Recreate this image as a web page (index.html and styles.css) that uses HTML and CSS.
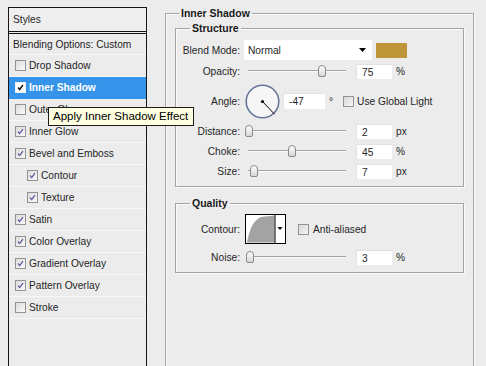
FILE: index.html
```html
<!DOCTYPE html>
<html>
<head>
<meta charset="utf-8">
<link rel="stylesheet" href="styles.css">
</head>
<body>
<div class="dialog">
  <aside class="styles-panel">
    <div class="styles-head">Styles</div>
    <ul class="style-list">
      <li class="row blend">Blending Options: Custom</li>
      <li class="row"><span class="cb"></span>Drop Shadow</li>
      <li class="row active"><span class="cb on"><svg viewBox="0 0 11 11"><path d="M2.5 5.5 L4.5 8 L8.5 2.5" /></svg></span>Inner Shadow</li>
      <li class="row"><span class="cb"></span>Outer Glow</li>
      <li class="row"><span class="cb on"><svg viewBox="0 0 11 11"><path d="M2.5 5.5 L4.5 8 L8.5 2.5" /></svg></span>Inner Glow</li>
      <li class="row"><span class="cb on"><svg viewBox="0 0 11 11"><path d="M2.5 5.5 L4.5 8 L8.5 2.5" /></svg></span>Bevel and Emboss</li>
      <li class="row sub"><span class="cb on"><svg viewBox="0 0 11 11"><path d="M2.5 5.5 L4.5 8 L8.5 2.5" /></svg></span>Contour</li>
      <li class="row sub"><span class="cb on"><svg viewBox="0 0 11 11"><path d="M2.5 5.5 L4.5 8 L8.5 2.5" /></svg></span>Texture</li>
      <li class="row"><span class="cb on"><svg viewBox="0 0 11 11"><path d="M2.5 5.5 L4.5 8 L8.5 2.5" /></svg></span>Satin</li>
      <li class="row"><span class="cb on"><svg viewBox="0 0 11 11"><path d="M2.5 5.5 L4.5 8 L8.5 2.5" /></svg></span>Color Overlay</li>
      <li class="row"><span class="cb on"><svg viewBox="0 0 11 11"><path d="M2.5 5.5 L4.5 8 L8.5 2.5" /></svg></span>Gradient Overlay</li>
      <li class="row"><span class="cb on"><svg viewBox="0 0 11 11"><path d="M2.5 5.5 L4.5 8 L8.5 2.5" /></svg></span>Pattern Overlay</li>
      <li class="row"><span class="cb"></span>Stroke</li>
    </ul>
  </aside>

  <div class="tooltip">Apply Inner Shadow Effect</div>

  <main class="settings">
    <fieldset class="group outer">
      <legend>Inner Shadow</legend>

      <fieldset class="group inner structure">
        <legend>Structure</legend>

        <div class="frow r-blend">
          <span class="lbl">Blend Mode:</span>
          <div class="select"><span>Normal</span><svg class="arrow" viewBox="0 0 7 4"><path d="M0 0 H7 L3.5 4 Z"/></svg></div>
          <span class="swatch"></span>
        </div>

        <div class="frow">
          <span class="lbl">Opacity:</span>
          <div class="slider"><span class="thumb" style="left:75%"></span></div>
          <span class="num">75</span><span class="unit">%</span>
        </div>

        <div class="frow r-angle">
          <span class="lbl">Angle:</span>
          <svg class="dial" viewBox="0 0 35 35">
            <circle cx="17.5" cy="17.5" r="16.3" />
            <line x1="17.5" y1="17.5" x2="29.5" y2="30.2" />
            <circle class="dot" cx="17.5" cy="17.5" r="1.6" />
          </svg>
          <span class="num wide">-47</span>
          <span class="deg">°</span>
          <span class="cb plain"></span>
          <span class="cb-lbl">Use Global Light</span>
        </div>

        <div class="frow">
          <span class="lbl">Distance:</span>
          <div class="slider"><span class="thumb" style="left:2%"></span></div>
          <span class="num">2</span><span class="unit">px</span>
        </div>

        <div class="frow">
          <span class="lbl">Choke:</span>
          <div class="slider"><span class="thumb" style="left:45%"></span></div>
          <span class="num">45</span><span class="unit">%</span>
        </div>

        <div class="frow">
          <span class="lbl">Size:</span>
          <div class="slider"><span class="thumb" style="left:7%"></span></div>
          <span class="num">7</span><span class="unit">px</span>
        </div>
      </fieldset>

      <fieldset class="group inner quality">
        <legend>Quality</legend>

        <div class="frow r-contour">
          <span class="lbl">Contour:</span>
          <svg class="contour" viewBox="0 0 41 30">
            <rect x="0.5" y="0.5" width="40" height="29" fill="#fff" stroke="#000"/>
            <path d="M2 28.5 C4 17, 8 6, 16 3 L29.5 1.5 L29.5 28.5 Z" fill="#a3a3a3"/>
            <line x1="30" y1="1" x2="30" y2="29" stroke="#000"/>
            <path d="M32.5 13 H37.5 L35 16 Z" fill="#000"/>
          </svg>
          <span class="cb plain aa"></span>
          <span class="cb-lbl">Anti-aliased</span>
        </div>

        <div class="frow r-noise">
          <span class="lbl">Noise:</span>
          <div class="slider"><span class="thumb" style="left:3%"></span></div>
          <span class="num">3</span><span class="unit">%</span>
        </div>
      </fieldset>
    </fieldset>
  </main>
</div>
</body>
</html>
```

FILE: styles.css
```css
* { box-sizing: border-box; }

html, body {
  margin: 0;
  height: 100%;
  overflow: hidden;
}

body {
  background: #ececec;
  font-family: "Liberation Sans", Arial, sans-serif;
  font-size: 10.2px;
  color: #262626;
}

.dialog {
  position: relative;
  display: flex;
  align-items: flex-start;
  padding: 7px 0 0 8px;
  height: 366px;
}

/* ---------- left styles list ---------- */
.styles-panel {
  width: 139px;
  height: 380px;
  flex: none;
  border: 1px solid #161616;
  border-bottom: none;
  background: #ececec;
}

.styles-head {
  height: 26px;
  line-height: 24px;
  padding-left: 4px;
  border-bottom: 3px double #111;
  background: #efefef;
}

.style-list {
  list-style: none;
  margin: 0;
  padding: 0;
}

.row {
  height: 22px;
  display: flex;
  align-items: center;
  padding-left: 6px;
  border-bottom: 1px solid #f8f8f8;
  white-space: nowrap;
}

.row.blend {
  height: 21px;
  padding-left: 4px;
}

.row.sub { padding-left: 18px; }

.row.active {
  background: #3594ea;
  color: #fff;
  font-weight: bold;
  border-bottom-color: #3594ea;
}

.cb {
  width: 11px;
  height: 11px;
  flex: none;
  margin-right: 3px;
  border: 1px solid #939393;
  background: linear-gradient(135deg, #dcdcdc, #fafafa);
  display: inline-flex;
}

.cb svg {
  width: 9px;
  height: 9px;
  fill: none;
  stroke: #5858a0;
  stroke-width: 1.5;
}

.active .cb {
  background: #fff;
  border-color: #f0f0f0;
}

.active .cb svg { stroke: #111; stroke-width: 1.8; }

/* ---------- tooltip ---------- */
.tooltip {
  position: absolute;
  left: 48px;
  top: 107px;
  height: 19px;
  padding: 0 5px 0 4px;
  line-height: 17px;
  font-size: 11.5px;
  color: #000;
  background: #ffffe1;
  border: 1px solid #1a1a1a;
  white-space: nowrap;
}

/* ---------- right settings ---------- */
.settings {
  margin: 0 0 0 18px;
  width: 309px;
  flex: none;
}

.group {
  margin: 0;
  border: 1px solid #a3a3a3;
  box-shadow: 1px 1px 0 #fbfbfb, inset 1px 1px 0 #fbfbfb;
}

.group legend {
  padding: 0 2px;
  font-weight: bold;
  font-size: 10.5px;
  line-height: 13px;
  color: #1a1a1a;
}

.outer {
  height: 420px;
  padding: 0 9px;
}

.outer > legend { margin-left: 4px; }

.inner > legend { margin-left: 14px; }

.structure {
  margin-top: 2px;
  padding: 5px 0 5px 0;
}

.quality {
  margin-top: 10px;
  padding: 4px 0 5px 0;
}

.frow {
  display: flex;
  align-items: center;
  height: 20px;
  white-space: nowrap;
}

.r-blend { margin-bottom: 1px; }
.r-angle { height: 40px; }
.r-contour { height: 30px; margin-bottom: 3px; }

.lbl {
  width: 64px;
  flex: none;
  text-align: right;
}

.select {
  margin-left: 4px;
  width: 128px;
  height: 20px;
  background: #fff;
  display: flex;
  align-items: center;
  justify-content: space-between;
  padding: 0 4px 0 4px;
}

.select .arrow {
  width: 7px;
  height: 4px;
  margin-right: 2px;
}

.swatch {
  margin-left: 4px;
  width: 31px;
  height: 15px;
  background: #bf9539;
}

.slider {
  position: relative;
  margin-left: 7px;
  width: 100px;
  height: 14px;
  flex: none;
}

.slider::before {
  content: "";
  position: absolute;
  left: 1px;
  right: 1px;
  top: 6px;
  height: 1px;
  background: #a2a2a2;
  box-shadow: 0 1px 0 #fafafa;
}

.thumb {
  position: absolute;
  top: 1px;
  width: 8px;
  height: 12px;
  transform: translateX(-50%);
  border: 1px solid #8a8a8a;
  border-radius: 4px 4px 2px 2px;
  background: linear-gradient(#ffffff, #d6d6d6);
}

.num {
  margin-left: 9px;
  width: 36px;
  height: 15px;
  line-height: 15px;
  padding-left: 5px;
  background: #fff;
  border-top: 1px solid #e2e2e2;
  border-left: 1px solid #e2e2e2;
  flex: none;
}

.unit { margin-left: 4px; }

.dial {
  margin-left: 5px;
  width: 35px;
  height: 35px;
  flex: none;
}

.dial circle {
  fill: #f6f6f6;
  stroke: #66769a;
  stroke-width: 1.6;
}

.dial .dot { fill: #000; stroke: none; }

.dial line {
  stroke: #000;
  stroke-width: 1;
}

.num.wide {
  margin-left: 3px;
  width: 42px;
  height: 16px;
}

.deg { margin-left: 4px; }

.cb.plain {
  margin-left: 10px;
  margin-right: 3px;
  background: linear-gradient(135deg, #d8d8d8, #f6f6f6);
}

.cb.aa { margin-left: 12px; margin-right: 4px; }

.contour {
  margin-left: 5px;
  width: 41px;
  height: 30px;
  flex: none;
}
```
